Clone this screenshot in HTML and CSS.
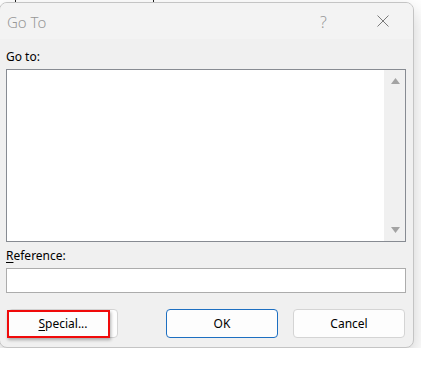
FILE: index.html
```html
<!DOCTYPE html>
<html lang="en">
<head>
  <meta charset="UTF-8" />
  <title>Go To</title>
  <link rel="stylesheet" href="styles.css">
</head>
<body>
  <div class="backdrop-marks"></div>

  <div class="dialog">
    <div class="titlebar">
      <span class="title">Go To</span>
      <span class="help">?</span>
      <span class="close">
        <svg width="12" height="12" viewBox="0 0 12 12">
          <path d="M0.5 0.5 L11.5 11.5 M11.5 0.5 L0.5 11.5" stroke="#7a7a7a" stroke-width="1" fill="none"/>
        </svg>
      </span>
    </div>

    <div class="content">
      <label class="field-label">Go to:</label>
      <div class="listbox">
        <div class="list-items"></div>
        <div class="scrollbar">
          <svg width="9" height="6" viewBox="0 0 9 6"><path d="M4.5 0 L9 6 L0 6 Z" fill="#a3a3a3"/></svg>
          <svg width="9" height="6" viewBox="0 0 9 6"><path d="M0 0 L9 0 L4.5 6 Z" fill="#a3a3a3"/></svg>
        </div>
      </div>

      <label class="field-label ref-label"><u>R</u>eference:</label>
      <input class="ref-input" type="text">

      <div class="buttons">
        <div class="special-wrap">
          <button class="btn special"><u>S</u>pecial...</button>
          <div class="highlight"></div>
        </div>
        <button class="btn ok">OK</button>
        <button class="btn cancel">Cancel</button>
      </div>
    </div>
  </div>
</body>
</html>
```

FILE: styles.css
```css
* {
  box-sizing: border-box;
}

body {
  margin: 0;
  background-color: #ffffff;
  font-family: 'Noto Sans', 'Open Sans', sans-serif;
  color: #000;
  overflow: hidden;
}

.backdrop-marks {
  height: 2px;
  width: 139px;
  margin-left: 15px;
  border-left: 1px solid #222;
  border-right: 1px solid #222;
}

.dialog {
  width: 415px;
  height: 346px;
  margin-left: -1px;
  background-color: #f0f0f0;
  border: 1px solid #c4c4c4;
  border-radius: 8px;
  box-shadow: 0 8px 20px rgba(0, 0, 0, 0.2);
  overflow: hidden;
}

.titlebar {
  height: 36px;
  background-color: #f3f3f3;
  display: flex;
  align-items: center;
  padding-left: 7px;
}

.title {
  flex: 1;
  font-size: 15px;
  font-weight: 300;
  color: #979797;
  margin-top: 1px;
}

.help {
  font-size: 16px;
  font-weight: 300;
  color: #989898;
  width: 10px;
  margin-right: 47px;
  margin-top: 1px;
}

.close {
  display: flex;
  margin-right: 24px;
}

.content {
  padding: 10px 0 0 6px;
}

.field-label {
  display: block;
  font-size: 12px;
  line-height: 16px;
  margin-bottom: 4px;
}

.field-label u {
  text-underline-offset: 2px;
}

.listbox {
  width: 400px;
  height: 173px;
  border: 1px solid #878b92;
  background-color: #ffffff;
  display: flex;
}

.list-items {
  flex: 1;
}

.scrollbar {
  width: 21px;
  background-color: #f0f0f0;
  display: flex;
  flex-direction: column;
  justify-content: space-between;
  align-items: center;
  padding: 8px 0 8px 1px;
}

.ref-label {
  margin-top: 6px;
}

.ref-input {
  display: block;
  width: 400px;
  height: 25px;
  border: 1px solid #acacac;
  background-color: #ffffff;
  margin: 0;
  outline: none;
}

.buttons {
  display: flex;
  margin-top: 16px;
  padding-left: 2px;
}

.btn {
  height: 29px;
  font-family: 'Noto Sans', 'Open Sans', sans-serif;
  font-size: 12px;
  color: #000;
  background-color: #fdfdfd;
  border: 1px solid #d4d4d4;
  border-radius: 4px;
  padding: 0;
}

.btn u {
  text-underline-offset: 2px;
}

.special-wrap {
  position: relative;
}

.special {
  width: 110px;
}

.highlight {
  position: absolute;
  left: -1px;
  top: 1px;
  width: 103px;
  height: 28px;
  border: 2px solid #f00a0a;
  box-shadow: 1px 2px 3px rgba(0, 0, 0, 0.3);
}

.ok {
  width: 112px;
  margin-left: 48px;
  border-color: #1d6fc1;
}

.cancel {
  width: 112px;
  margin-left: 15px;
}
```
